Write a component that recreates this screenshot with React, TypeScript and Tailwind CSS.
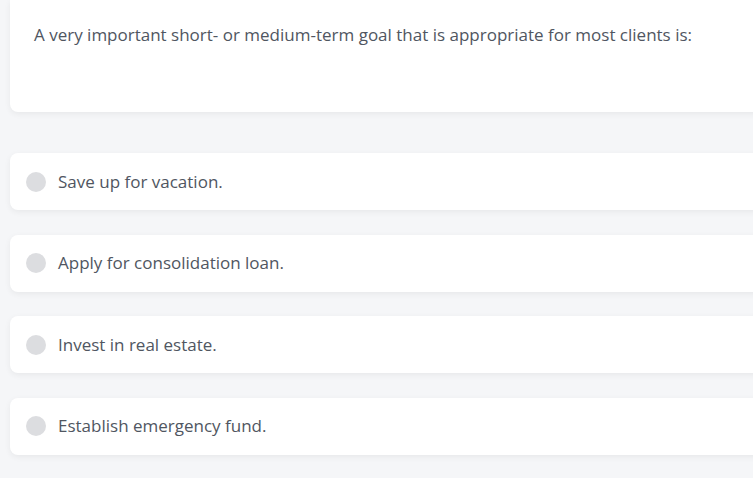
const options = [
  'Save up for vacation.',
  'Apply for consolidation loan.',
  'Invest in real estate.',
  'Establish emergency fund.',
];

export default function App() {
  return (
    <div
      className="h-[478px] w-full overflow-hidden bg-[#f5f6f8] pl-[10px] text-[17px] leading-6 text-[#505661]"
      style={{ fontFamily: '"Open Sans", "Noto Sans", sans-serif' }}
    >
      <div className="w-[800px]">
        <div className="h-[112px] rounded-b-lg bg-white px-6 pt-[23px] shadow-[0_2px_6px_rgba(0,0,0,0.06)]">
          <p>A very important short- or medium-term goal that is appropriate for most clients is:</p>
        </div>

        <div className="mt-[41px] flex flex-col gap-[24.6px]">
          {options.map((opt) => (
            <label
              key={opt}
              className="flex h-[57px] cursor-pointer items-center gap-3 rounded-lg bg-white px-4 shadow-[0_2px_6px_rgba(0,0,0,0.06)]"
            >
              <span className="h-5 w-5 shrink-0 rounded-full bg-[#dcdde0]" />
              <span>{opt}</span>
            </label>
          ))}
        </div>
      </div>
    </div>
  );
}
